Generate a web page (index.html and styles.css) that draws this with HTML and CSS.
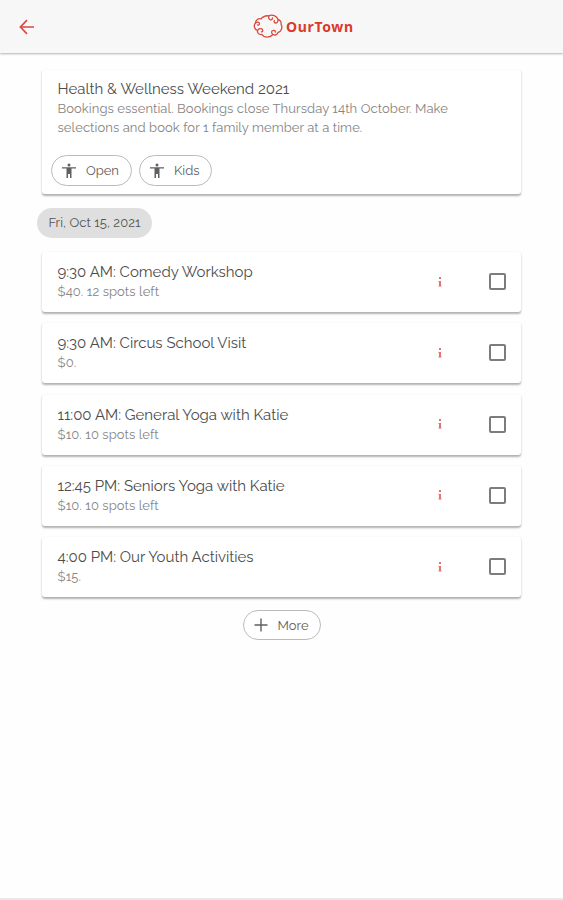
FILE: index.html
```html
<!DOCTYPE html>
<html lang="en">
<head>
    <meta charset="UTF-8">
    <meta name="viewport" content="width=device-width, initial-scale=1.0">
    <title>OurTown</title>
    <link rel="stylesheet" href="styles.css">
</head>
<body>
    <header class="topbar">
        <svg class="back" viewBox="0 0 16 16"><path d="M8 1.2 1.4 8 8 14.8M1.400 8H15"/></svg>
        <div class="logo">
            <svg viewBox="0 0 30 25">
                <path d="M8 5C10 2 13 1.500 16 1.800C19 0 24 2 25 5.500C27 6 28.500 8 28 10C30 14 28 18 25 18.500C24 21 22 21.500 20 20.500C17 24 11 24 9 20.500C6 21 4 19 4.500 16.500C1 15.500 .5 11 2.500 9C2.500 6 5.500 4 8 5Z"/>
                <path d="M2.500 9c1.500-1.500 4-1 4 .7s-2 1.600-2.200.8M4.500 16.500c.8-2 4-2.500 5-.8s-.5 2.600-1.500 1.800M20 20.500c-2-1-1.800-4 .2-4.200s2.800 1.400 1.800 2.200M25 5.500c.5 2.500-1.500 4-3 3.300s-1-2.300 0-2.400M16 1.800c-1 1.700 0 4 1.700 4s2.300-1.700 1.300-2.300"/>
            </svg>
            <span>OurTown</span>
        </div>
    </header>

    <main class="content">
        <section class="card intro">
            <h1 class="title">Health &amp; Wellness Weekend 2021</h1>
            <p class="sub">Bookings essential. Bookings close Thursday 14th October. Make<br>selections and book for 1 family member at a time.</p>
            <div class="chips">
                <button class="chip open">
                    <svg viewBox="0 0 16 16"><circle cx="8" cy="2" r="1.500"/><path d="M1 4.200h14v1.200h-4.500V15H9v-4H7v4H5.500V5.400H1z"/></svg>
                    <span>Open</span>
                </button>
                <button class="chip kids">
                    <svg viewBox="0 0 16 16"><circle cx="8" cy="2" r="1.500"/><path d="M1 4.200h14v1.200h-4.500V15H9v-4H7v4H5.500V5.400H1z"/></svg>
                    <span>Kids</span>
                </button>
            </div>
        </section>

        <div class="date">Fri, Oct 15, 2021</div>

        <div class="card event">
            <div class="info">
                <h2 class="title">9:30 AM: Comedy Workshop</h2>
                <p class="sub">$40. 12 spots left</p>
            </div>
            <svg class="more-info" viewBox="0 0 6 12"><path d="M2 1h2v2H2zM1.500 5H4v5H2V6h-.5zM1.500 9.500h3v1h-3z"/></svg>
            <span class="checkbox"></span>
        </div>
        <div class="card event">
            <div class="info">
                <h2 class="title">9:30 AM: Circus School Visit</h2>
                <p class="sub">$0.</p>
            </div>
            <svg class="more-info" viewBox="0 0 6 12"><path d="M2 1h2v2H2zM1.500 5H4v5H2V6h-.5zM1.500 9.500h3v1h-3z"/></svg>
            <span class="checkbox"></span>
        </div>
        <div class="card event">
            <div class="info">
                <h2 class="title">11:00 AM: General Yoga with Katie</h2>
                <p class="sub">$10. 10 spots left</p>
            </div>
            <svg class="more-info" viewBox="0 0 6 12"><path d="M2 1h2v2H2zM1.500 5H4v5H2V6h-.5zM1.500 9.500h3v1h-3z"/></svg>
            <span class="checkbox"></span>
        </div>
        <div class="card event">
            <div class="info">
                <h2 class="title">12:45 PM: Seniors Yoga with Katie</h2>
                <p class="sub">$10. 10 spots left</p>
            </div>
            <svg class="more-info" viewBox="0 0 6 12"><path d="M2 1h2v2H2zM1.500 5H4v5H2V6h-.5zM1.500 9.500h3v1h-3z"/></svg>
            <span class="checkbox"></span>
        </div>
        <div class="card event">
            <div class="info">
                <h2 class="title">4:00 PM: Our Youth Activities</h2>
                <p class="sub">$15.</p>
            </div>
            <svg class="more-info" viewBox="0 0 6 12"><path d="M2 1h2v2H2zM1.500 5H4v5H2V6h-.5zM1.500 9.500h3v1h-3z"/></svg>
            <span class="checkbox"></span>
        </div>

        <button class="chip more">
            <svg viewBox="0 0 16 16"><path d="M7.300 1.500h1.400v5.800h5.800v1.400H8.700v5.800H7.300V8.700H1.500V7.300h5.800z"/></svg>
            <span>More</span>
        </button>
    </main>

    <footer class="bottom"></footer>
</body>
</html>
```
FILE: styles.css
```css
* {
    box-sizing: border-box;
}

body {
    margin: 0;
    height: 900px;
    display: flex;
    flex-direction: column;
    overflow: hidden;
    background: #fefefe;
    font-family: Raleway, Lato, sans-serif;
    color: #4c4c4c;
}

h1, h2, p {
    margin: 0;
}

/* Top bar */
.topbar {
    display: flex;
    align-items: center;
    height: 53px;
    flex-shrink: 0;
    padding: 0 19px;
    background: #f7f7f7;
    box-shadow: 0 1px 2px rgba(0, 0, 0, 0.3);
}

.back {
    width: 16px;
    height: 16px;
    fill: none;
    stroke: #dc4a42;
    stroke-width: 1.7;
}

.logo {
    display: flex;
    align-items: center;
    gap: 3px;
    margin-left: 218px;
    color: #dc3a2b;
    font: bold 14px/20px "Noto Sans", sans-serif;
    letter-spacing: 0.65px;
}

.logo svg {
    width: 30px;
    height: 25px;
    fill: none;
    stroke: #d94a3c;
    stroke-width: 1.3;
}

/* Cards */
.content {
    flex: 1;
    display: flex;
    flex-direction: column;
    padding: 17px 42px 0;
}

.card {
    background: #fff;
    border-radius: 3px;
    box-shadow: 0 1.5px 2px rgba(0, 0, 0, 0.3);
}

.title {
    font-size: 15px;
    font-weight: normal;
    line-height: 20px;
    white-space: nowrap;
}

.sub {
    font-size: 13px;
    line-height: 19px;
    letter-spacing: 0.08px;
    color: #858585;
    white-space: nowrap;
}

.intro {
    height: 124px;
    padding: 9px 15.5px 0;
}

.chips {
    display: flex;
    gap: 7px;
    margin: 18px 0 0 -6.5px;
}

.chip {
    display: flex;
    align-items: center;
    height: 31px;
    padding: 0 0 0 9px;
    gap: 9px;
    border: 1px solid #bbb;
    border-radius: 16px;
    background: #fff;
    font: 13px Raleway, Lato, sans-serif;
    color: #606060;
}

.chip svg {
    width: 16px;
    height: 16px;
    fill: #606060;
}

.open {
    width: 81px;
}

.kids {
    width: 73px;
}

.date {
    width: 115px;
    height: 30px;
    margin: 14px 0 14px -5px;
    border-radius: 15px;
    background: #dfdfdf;
    font-size: 13px;
    line-height: 29px;
    letter-spacing: 0.05px;
    text-align: center;
    color: #555;
}

/* Events */
.event {
    display: flex;
    align-items: center;
    height: 60px;
    margin-bottom: 11.25px;
    padding: 0 15px 1px 15.5px;
}

.info {
    flex: 1;
}

.more-info {
    width: 6px;
    height: 12px;
    margin-right: 46px;
    fill: #e0746e;
}

.checkbox {
    width: 17px;
    height: 17px;
    border: 2px solid #7c7c7c;
    border-radius: 2px;
}

.more {
    align-self: center;
    width: 78px;
    height: 30px;
    margin-top: 2px;
}

.bottom {
    height: 2px;
    background: #e8e8e8;
}
```
